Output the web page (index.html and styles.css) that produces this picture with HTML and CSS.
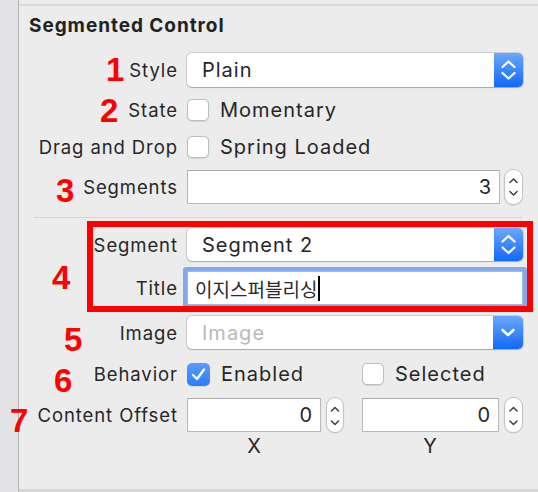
FILE: index.html
```html
<!DOCTYPE html>
<html>
<head>
<meta charset="utf-8">
<link rel="stylesheet" href="styles.css">
</head>
<body>
<div class="window">
  <aside class="sidebar"></aside>
  <main class="panel">
    <div class="topline"></div>
    <h2 class="heading">Segmented Control</h2>
    <div class="form">
      <div class="row r-style">
        <span class="lbl">Style</span>
        <div class="popup"><span class="popup-text">Plain</span><span class="popup-btn"><svg width="29" height="34" viewBox="0 0 29 34"><path d="M8.5 14 L14.5 8.5 L20.5 14 M8.5 20 L14.5 25.5 L20.5 20" fill="none" stroke="#fff" stroke-width="2.2" stroke-linecap="round" stroke-linejoin="round"/></svg></span></div>
      </div>
      <div class="row r-state">
        <span class="lbl">State</span>
        <div class="check-line"><span class="checkbox"></span><span class="ctext">Momentary</span></div>
      </div>
      <div class="row r-drag">
        <span class="lbl">Drag and Drop</span>
        <div class="check-line"><span class="checkbox"></span><span class="ctext">Spring Loaded</span></div>
      </div>
      <div class="row r-segments">
        <span class="lbl">Segments</span>
        <div class="num-group">
          <div class="field">3</div>
          <div class="stepper"><svg width="19" height="34" viewBox="0 0 19 34"><path d="M5.5 12 L9.5 8 L13.5 12 M5.5 22 L9.5 26 L13.5 22" fill="none" stroke="#3a3a3a" stroke-width="1.6" stroke-linecap="round" stroke-linejoin="round"/></svg></div>
        </div>
      </div>
      <div class="sep"></div>
      <div class="row r-segment">
        <span class="lbl">Segment</span>
        <div class="popup"><span class="popup-text">Segment 2</span><span class="popup-btn"><svg width="29" height="33" viewBox="0 0 29 33"><path d="M8.5 13.5 L14.5 8 L20.5 13.5 M8.5 19.5 L14.5 25 L20.5 19.5" fill="none" stroke="#fff" stroke-width="2.2" stroke-linecap="round" stroke-linejoin="round"/></svg></span></div>
      </div>
      <div class="row r-title">
        <span class="lbl">Title</span>
        <div class="title-field"><span class="cjk">이지스퍼블리싱</span><span class="caret"></span></div>
      </div>
      <div class="row r-image">
        <span class="lbl">Image</span>
        <div class="popup"><span class="popup-text placeholder">Image</span><span class="popup-btn"><svg width="30" height="33" viewBox="0 0 30 33"><path d="M9.5 14 L15 19 L20.5 14" fill="none" stroke="#fff" stroke-width="2.6" stroke-linecap="round" stroke-linejoin="round"/></svg></span></div>
      </div>
      <div class="row r-behavior">
        <span class="lbl">Behavior</span>
        <div class="pair">
          <div class="check-line"><span class="checkbox checked"><svg width="23" height="23" viewBox="0 0 23 23"><path d="M6 12 L10 16 L17 6.5" fill="none" stroke="#fff" stroke-width="2.4" stroke-linecap="round" stroke-linejoin="round"/></svg></span><span class="ctext">Enabled</span></div>
          <div class="check-line"><span class="checkbox"></span><span class="ctext">Selected</span></div>
        </div>
      </div>
      <div class="row r-offset">
        <span class="lbl">Content Offset</span>
        <div class="pair">
          <div class="num-group">
            <div class="field">0</div>
            <div class="stepper"><svg width="18" height="36" viewBox="0 0 18 36"><path d="M5 12.5 L9 8.5 L13 12.5 M5 23.5 L9 27.5 L13 23.5" fill="none" stroke="#3a3a3a" stroke-width="1.6" stroke-linecap="round" stroke-linejoin="round"/></svg></div>
          </div>
          <div class="num-group">
            <div class="field">0</div>
            <div class="stepper"><svg width="19" height="36" viewBox="0 0 19 36"><path d="M5.5 12.5 L9.5 8.5 L13.5 12.5 M5.5 23.5 L9.5 27.5 L13.5 23.5" fill="none" stroke="#3a3a3a" stroke-width="1.6" stroke-linecap="round" stroke-linejoin="round"/></svg></div>
          </div>
        </div>
      </div>
      <div class="row r-xy">
        <span class="lbl"></span>
        <div class="pair">
          <span class="axis axis-x">X</span>
          <span class="axis axis-y">Y</span>
        </div>
      </div>
    </div>
    <div class="bottomline"></div>
  </main>

  <div class="redbox"></div>
  <span class="annot n1">1</span>
  <span class="annot n2">2</span>
  <span class="annot n3">3</span>
  <span class="annot n4">4</span>
  <span class="annot n5">5</span>
  <span class="annot n6">6</span>
  <span class="annot n7">7</span>
</div>
</body>
</html>
```

FILE: styles.css
```css
* { box-sizing: border-box; }

body {
  margin: 0;
  font-family: Inter, "Noto Sans", sans-serif;
  color: #262626;
  background: #ececec;
}

.window {
  position: relative;
  width: 538px;
  height: 492px;
  display: flex;
  overflow: hidden;
  background: #ececec;
}

.sidebar {
  flex: none;
  width: 19px;
  background: #e3e3e6;
  border-right: 1px solid #b3b3b3;
}

.panel {
  flex: 1;
  display: flex;
  flex-direction: column;
}

.topline {
  margin-top: 4px;
  height: 2px;
  background: #d8d8d8;
}

.heading {
  margin: 8px 0 0 10px;
  font-size: 19px;
  font-weight: 700;
  letter-spacing: 0.95px;
  line-height: 24px;
  color: #222;
}

.form {
  display: flex;
  flex-direction: column;
  padding-right: 15px;
}

.row {
  display: grid;
  grid-template-columns: 158px 336px;
  column-gap: 10px;
  align-items: center;
  font-size: 20px;
  letter-spacing: 1px;
}

.lbl {
  text-align: right;
  white-space: nowrap;
  font-size: 18.5px;
  letter-spacing: 0.9px;
  margin-right: -0.9px;
}

.r-style { margin-top: 15px; height: 34px; }
.r-state { margin-top: 8px; height: 30px; }
.r-drag { margin-top: 7px; height: 30px; }
.r-segments { margin-top: 8px; height: 34px; }
.sep { margin: 13px 0 0 15px; width: 488px; height: 1px; background: #d3d3d3; }
.r-segment { margin-top: 10px; height: 33px; }
.r-title { margin-top: 10px; height: 34px; }
.r-image { margin-top: 11px; height: 33px; }
.r-behavior { margin-top: 10px; height: 30px; }
.r-offset { margin-top: 9px; height: 34px; }
.r-xy { margin-top: 4px; height: 20px; }

/* popup button */
.popup {
  display: flex;
  height: 100%;
  background: #fff;
  border-radius: 5px;
  overflow: hidden;
  box-shadow: 0 0 0 1px rgba(0, 0, 0, 0.13), 0 1px 1px rgba(0, 0, 0, 0.18);
}

.popup-text {
  flex: 1;
  align-self: center;
  padding-left: 15px;
}

.placeholder { color: #b9b9b9; }

.popup-btn {
  flex: none;
  width: 29px;
  display: flex;
  background: linear-gradient(#6aa8fd, #1268fb);
}

.r-image .popup-btn { width: 30px; }

/* checkbox */
.check-line {
  display: flex;
  align-items: center;
  gap: 11px;
}

.checkbox {
  flex: none;
  width: 22px;
  height: 22px;
  border-radius: 5px;
  background: #fff;
  border: 1px solid #bdbdbd;
  box-shadow: 0 0.5px 1px rgba(0, 0, 0, 0.1);
}

.checkbox.checked {
  width: 23px;
  height: 23px;
  border: none;
  background: linear-gradient(#5a9cfd, #2b7cfb);
  display: flex;
}

/* numeric field + stepper */
.num-group {
  display: flex;
  gap: 4px;
  height: 34px;
  align-items: stretch;
}

.field {
  flex: 1;
  display: flex;
  align-items: center;
  justify-content: flex-end;
  padding-right: 8px;
  letter-spacing: 0;
  background: #fff;
  border: 1px solid #b8b8b8;
  border-top-color: #aaaaaa;
}

.stepper {
  flex: none;
  width: 19px;
  margin-top: -1px;
  margin-bottom: -1px;
  border-radius: 9px;
  background: #fff;
  border: 1px solid #c4c4c4;
  box-shadow: 0 0.5px 1px rgba(0, 0, 0, 0.12);
  display: flex;
  overflow: hidden;
}

.pair {
  display: grid;
  grid-template-columns: 175px 161px;
  align-items: center;
}

.pair .num-group:first-child { width: 157px; gap: 5px; }
.pair .num-group:first-child .stepper { width: 18px; }
.pair .num-group:last-child { gap: 5px; }

.axis {
  text-align: center;
  line-height: 20px;
  letter-spacing: 0;
}
.axis-x { width: 134px; }
.axis-y { width: 136px; }

/* focused title field */
.title-field {
  height: 34px;
  display: flex;
  align-items: center;
  padding-left: 7px;
  background: #fff;
  border: 1px solid #9bbbef;
  border-radius: 1px;
  box-shadow: 0 0 0 4px #82a9ec;
}

.cjk {
  font-family: "Noto Sans CJK KR", sans-serif;
  font-size: 19px;
  letter-spacing: 0;
  color: #2a2a2a;
}

.caret {
  width: 2px;
  height: 25px;
  background: #000;
  margin-left: 1px;
}

.bottomline {
  margin-top: auto;
  height: 3px;
  background: #d6d6d6;
}

/* annotations */
.redbox {
  position: absolute;
  left: 87px;
  top: 221px;
  width: 446px;
  height: 91px;
  border: 6px solid #fe0000;
}

.annot {
  position: absolute;
  font-family: "Liberation Sans", Arial, sans-serif;
  font-weight: 700;
  font-size: 33px;
  line-height: 33px;
  color: #fe0000;
}

.n1 { left: 106px; top: 53px; }
.n2 { left: 100px; top: 94px; }
.n3 { left: 56px; top: 174px; }
.n4 { left: 52px; top: 261px; }
.n5 { left: 64px; top: 323px; }
.n6 { left: 54px; top: 364px; }
.n7 { left: 10px; top: 404px; }
```
